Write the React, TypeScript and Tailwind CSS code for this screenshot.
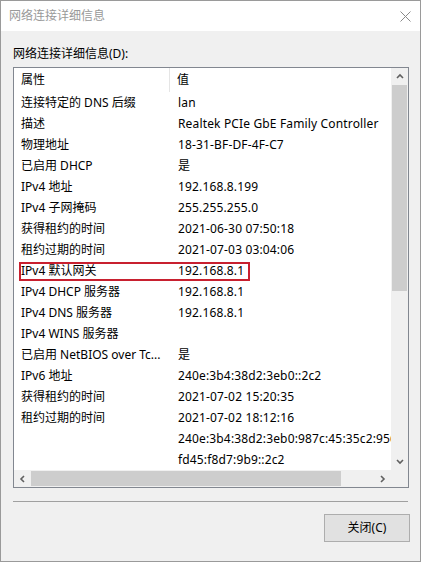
const rows: [string, string][] = [
  ['连接特定的 DNS 后缀', 'lan'],
  ['描述', 'Realtek PCIe GbE Family Controller'],
  ['物理地址', '18-31-BF-DF-4F-C7'],
  ['已启用 DHCP', '是'],
  ['IPv4 地址', '192.168.8.199'],
  ['IPv4 子网掩码', '255.255.255.0'],
  ['获得租约的时间', '2021-06-30 07:50:18'],
  ['租约过期的时间', '2021-07-03 03:04:06'],
  ['IPv4 默认网关', '192.168.8.1'],
  ['IPv4 DHCP 服务器', '192.168.8.1'],
  ['IPv4 DNS 服务器', '192.168.8.1'],
  ['IPv4 WINS 服务器', ''],
  ['已启用 NetBIOS over Tc...', '是'],
  ['IPv6 地址', '240e:3b4:38d2:3eb0::2c2'],
  ['获得租约的时间', '2021-07-02 15:20:35'],
  ['租约过期的时间', '2021-07-02 18:12:16'],
  ['', '240e:3b4:38d2:3eb0:987c:45:35c2:956'],
  ['', 'fd45:f8d7:9b9::2c2'],
];

function Chevron({ dir }: { dir: 'up' | 'down' | 'left' | 'right' }) {
  const d = {
    up: 'M1 5 L4 2 L7 5',
    down: 'M1 2 L4 5 L7 2',
    left: 'M5 1 L2 4 L5 7',
    right: 'M2 1 L5 4 L2 7',
  }[dir];
  return (
    <svg width="8" height="8" viewBox="0 0 8 8">
      <path d={d} fill="none" stroke="#606060" strokeWidth="1.6" />
    </svg>
  );
}

export default function App() {
  return (
    <div
      className="w-[422px] h-[563px] bg-white text-[12px] text-black"
      style={{ fontFamily: '"Noto Sans", "Noto Sans CJK SC", sans-serif' }}
    >
      <div className="w-[421px] h-[562px] border border-[#9a9a9a] bg-[#f0f0f0] flex flex-col">
        {/* title bar */}
        <div className="h-[30px] bg-white flex items-center justify-between pl-[8px] pr-[9px]">
          <span className="text-[#999999] leading-none">网络连接详细信息</span>
          <svg width="11" height="11" viewBox="0 0 11 11">
            <path d="M0.5 0.5 L10.5 10.5 M10.5 0.5 L0.5 10.5" stroke="#8a8a8a" strokeWidth="1" />
          </svg>
        </div>

        <div className="flex flex-col pl-[12px] pt-[15px]">
          <div className="h-[16px] leading-[16px]">网络连接详细信息(D):</div>

          {/* list view */}
          <div className="mt-[5px] w-[396px] h-[421px] border border-[#828790] bg-white grid grid-cols-[1fr_17px] grid-rows-[1fr_17px]">
            <div className="overflow-hidden whitespace-nowrap">
              <div className="h-[24px] flex items-center">
                <div className="w-[156px] pl-[7px] h-full flex items-center border-r border-[#e5e5e5]">属性</div>
                <div className="pl-[7px]">值</div>
              </div>
              {rows.map(([k, v], i) => (
                <div key={i} className="relative h-[21px] flex items-center">
                  <div className="w-[164px] shrink-0 pl-[7px]">{k}</div>
                  <div className="shrink-0 tracking-[0.15px]">{v}</div>
                  {i === 8 && (
                    <span className="absolute left-[5px] top-[2px] w-[231px] h-[19px] border-2 border-[#c8202f]" />
                  )}
                </div>
              ))}
            </div>

            {/* vertical scrollbar */}
            <div className="bg-[#f0f0f0] flex flex-col items-center">
              <div className="h-[17px] flex items-center justify-center">
                <Chevron dir="up" />
              </div>
              <div className="w-[15px] h-[206px] bg-[#cdcdcd]" />
              <div className="flex-1" />
              <div className="h-[17px] flex items-center justify-center">
                <Chevron dir="down" />
              </div>
            </div>

            {/* horizontal scrollbar */}
            <div className="bg-[#f0f0f0] flex items-center">
              <div className="w-[17px] flex items-center justify-center">
                <Chevron dir="left" />
              </div>
              <div className="w-[310px] h-[15px] bg-[#cdcdcd]" />
              <div className="flex-1" />
              <div className="w-[17px] flex items-center justify-center">
                <Chevron dir="right" />
              </div>
            </div>
            <div className="bg-[#f0f0f0]" />
          </div>

          <div className="mt-[13px] w-[395px] h-[1px] bg-[#a0a0a0]" />

          <div className="mt-[12px] w-[397px] flex justify-end">
            <button className="w-[86px] h-[28px] bg-[#e1e1e1] border border-[#adadad] text-[12px] flex items-center justify-center">
              关闭(C)
            </button>
          </div>
        </div>
      </div>
    </div>
  );
}
